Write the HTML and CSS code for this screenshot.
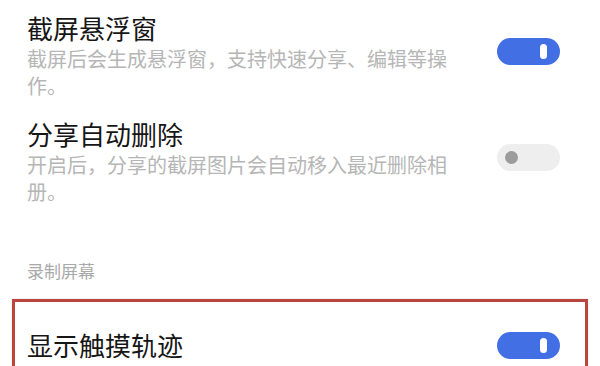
FILE: index.html
```html
<!DOCTYPE html>
<html lang="zh-CN">
<head>
<meta charset="utf-8">
<title>截屏设置</title>
<link rel="stylesheet" href="styles.css">
</head>
<body>
<main class="settings">
  <div class="item first">
    <div class="text">
      <div class="title">截屏悬浮窗</div>
      <div class="desc">截屏后会生成悬浮窗，支持快速分享、编辑等操作。</div>
    </div>
    <span class="switch on"><span class="knob"></span></span>
  </div>
  <div class="item">
    <div class="text">
      <div class="title">分享自动删除</div>
      <div class="desc">开启后，分享的截屏图片会自动移入最近删除相册。</div>
    </div>
    <span class="switch off"><span class="knob"></span></span>
  </div>
  <div class="section-label">录制屏幕</div>
  <div class="item highlighted">
    <div class="text">
      <div class="title">显示触摸轨迹</div>
    </div>
    <span class="switch on"><span class="knob"></span></span>
  </div>
</main>
</body>
</html>
```
FILE: styles.css
```css
html, body {
  margin: 0;
  padding: 0;
  background: #ffffff;
}
html {
  height: 100%;
  overflow: hidden;
}
body {
  height: 100%;
  font-family: "Noto Sans CJK SC", "Noto Sans", sans-serif;
  overflow: hidden;
}
.settings {
  display: flex;
  flex-direction: column;
}
.item {
  display: flex;
  align-items: center;
  padding: 9px 40px 9px 27px;
}
.item.first {
  padding-top: 11px;
}
.text {
  flex: 0 1 430px;
}
.title {
  font-size: 26px;
  line-height: 34px;
  color: #161616;
}
.desc {
  font-size: 20px;
  line-height: 27px;
  color: #b6b6b6;
}
.switch {
  margin-left: auto;
  margin-bottom: 7px;
  width: 63px;
  height: 27px;
  border-radius: 14px;
  box-sizing: border-box;
  display: flex;
  align-items: center;
  flex: none;
}
.switch.on {
  background: #4270e4;
  justify-content: flex-end;
  padding-right: 13px;
}
.switch.on .knob {
  width: 7px;
  height: 15px;
  border-radius: 4px;
  background: #ffffff;
}
.switch.off {
  background: #eeeeee;
  justify-content: flex-start;
  padding-left: 8px;
}
.switch.off .knob {
  width: 13px;
  height: 13px;
  border-radius: 50%;
  background: #9c9c9c;
}
.section-label {
  padding: 46px 27px 0;
  font-size: 17px;
  line-height: 22px;
  color: #a9a9a9;
}
.item.highlighted {
  margin: 17px 12px 0;
  border: 3px solid #b8463f;
  padding: 26px 25px 26px 12px;
  box-shadow: 0 0 2px rgba(0, 0, 0, 0.15);
}
.item.highlighted .switch {
  margin-bottom: 0;
}
```
